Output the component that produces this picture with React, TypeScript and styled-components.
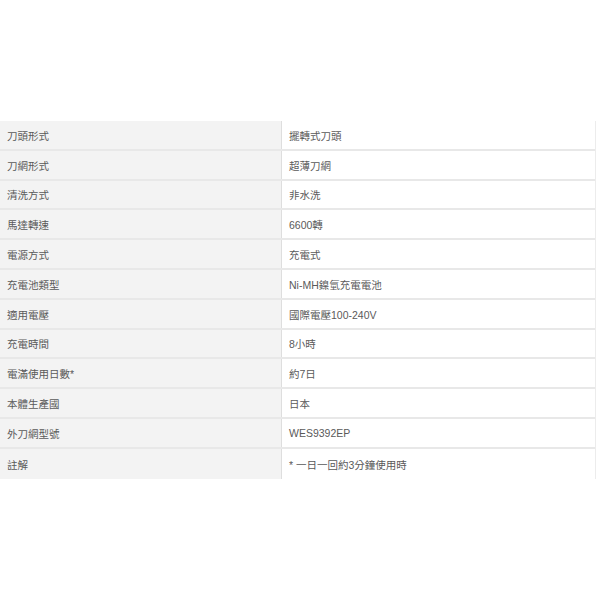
import React from 'react';
import styled, { createGlobalStyle } from 'styled-components';

// SPEC DATA
const specs: [string, string][] = [
  ['刀頭形式', '擺轉式刀頭'],
  ['刀網形式', '超薄刀網'],
  ['清洗方式', '非水洗'],
  ['馬達轉速', '6600轉'],
  ['電源方式', '充電式'],
  ['充電池類型', 'Ni-MH鎳氫充電電池'],
  ['適用電壓', '國際電壓100-240V'],
  ['充電時間', '8小時'],
  ['電滿使用日數*', '約7日'],
  ['本體生產國', '日本'],
  ['外刀網型號', 'WES9392EP'],
  ['註解', '* 一日一回約3分鐘使用時'],
];

const App: React.FC = () => {
  return (
    <>
      <GlobalStyle />
      <Page>
        <SpecTable>
          {specs.map(([label, value]) => (
            <Row key={label}>
              <Label>{label}</Label>
              <Value>{value}</Value>
            </Row>
          ))}
        </SpecTable>
      </Page>
    </>
  );
};

// STYLED COMPONENTS
const GlobalStyle = createGlobalStyle`
  body {
    margin: 0;
    background: #ffffff;
    font-family: 'Liberation Sans', Arial, 'Noto Sans CJK TC', sans-serif;
  }
`;

const Page = styled.div`
  width: 600px;
  height: 600px;
  padding-top: 121px;
  box-sizing: border-box;
`;

const SpecTable = styled.div`
  width: 596px;
  border-right: 1px solid #ececec;
  box-sizing: border-box;
`;

const Row = styled.div`
  display: grid;
  grid-template-columns: 282px 1fr;
  height: 29.8px;
  border-bottom: 2px solid #e8e8e8;
  box-sizing: border-box;
  font-size: 10.5px;
  color: #5a5a5a;
  &:last-child {
    border-bottom: none;
  }
`;

const Label = styled.div`
  display: flex;
  align-items: center;
  padding: 1px 0 0 7px;
  background: #f3f3f3;
  border-right: 1px solid #dedede;
`;

const Value = styled.div`
  display: flex;
  align-items: center;
  padding: 1px 0 0 7px;
  background: #ffffff;
`;

export default App;
